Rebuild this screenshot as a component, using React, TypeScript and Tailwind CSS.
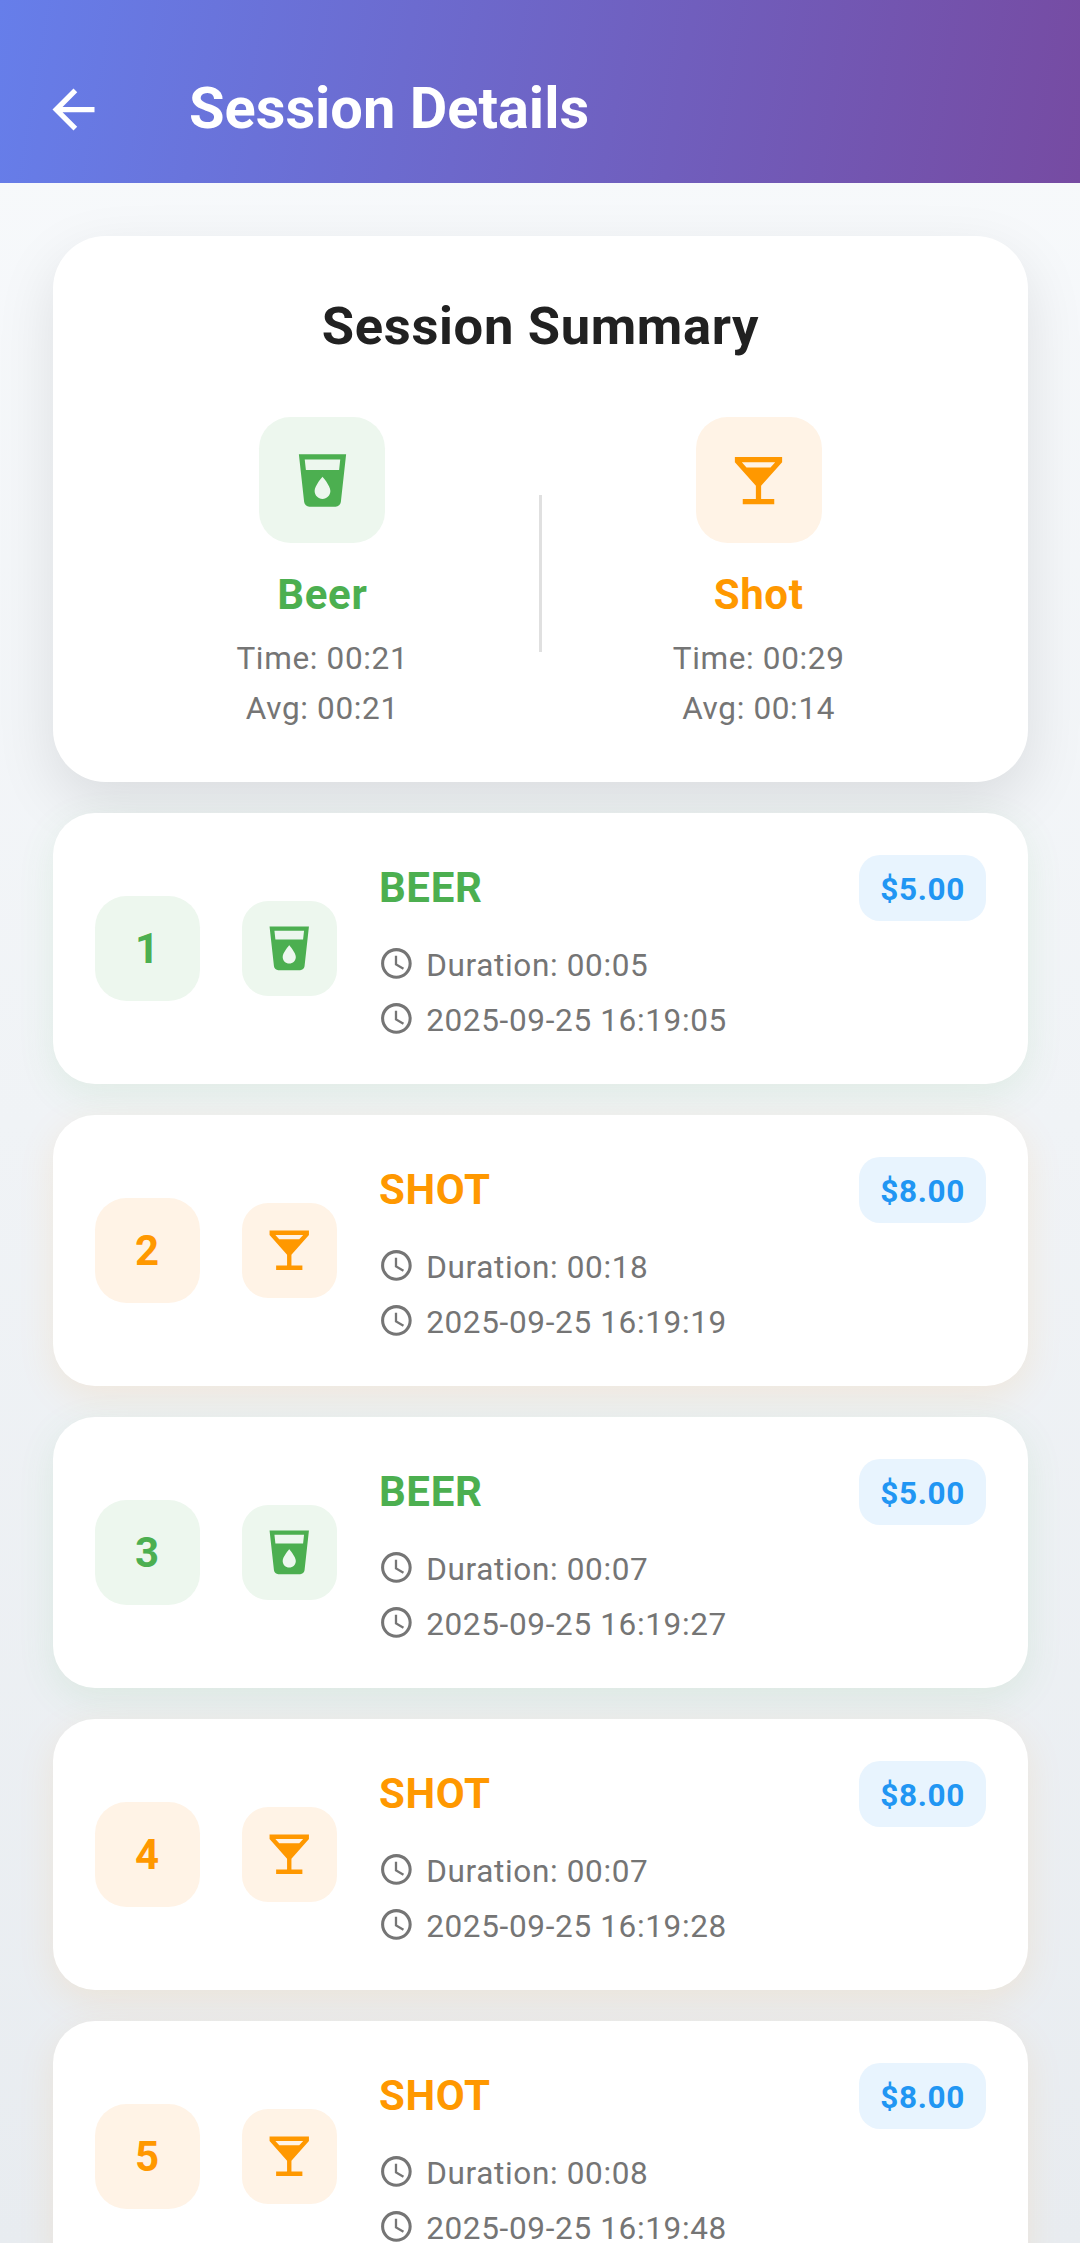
import { MdAccessTime, MdArrowBack, MdLocalBar, MdLocalDrink } from 'react-icons/md'

const drinks = {
  beer: {
    label: 'Beer',
    icon: MdLocalDrink,
    text: 'text-[#4caf50]',
    tint: 'bg-[#edf7ee]',
    shadow: 'shadow-[0_10.5px_37px_rgba(76,175,80,0.1)]',
  },
  shot: {
    label: 'Shot',
    icon: MdLocalBar,
    text: 'text-[#ff9800]',
    tint: 'bg-[#fff3e6]',
    shadow: 'shadow-[0_10.5px_37px_rgba(255,152,0,0.1)]',
  },
}

type Kind = keyof typeof drinks

const summary: { kind: Kind; time: string; avg: string }[] = [
  { kind: 'beer', time: '00:21', avg: '00:21' },
  { kind: 'shot', time: '00:29', avg: '00:14' },
]

const entries: { kind: Kind; duration: string; date: string; price: string }[] = [
  { kind: 'beer', duration: '00:05', date: '2025-09-25 16:19:05', price: '$5.00' },
  { kind: 'shot', duration: '00:18', date: '2025-09-25 16:19:19', price: '$8.00' },
  { kind: 'beer', duration: '00:07', date: '2025-09-25 16:19:27', price: '$5.00' },
  { kind: 'shot', duration: '00:07', date: '2025-09-25 16:19:28', price: '$8.00' },
  { kind: 'shot', duration: '00:08', date: '2025-09-25 16:19:48', price: '$8.00' },
]

function Header() {
  return (
    <header className="h-[183px] shrink-0 pt-9 pl-[42px] flex items-center bg-[linear-gradient(99.6deg,#667eea,#764ba2)] text-white">
      <MdArrowBack className="size-[63px]" />
      <h1 className="ml-[84px] pb-0.5 text-[57.75px] leading-none font-bold">Session Details</h1>
    </header>
  )
}

function SummaryItem({ kind, time, avg }: (typeof summary)[number]) {
  const drink = drinks[kind]
  const Icon = drink.icon
  return (
    <div className="flex-1 h-[313px] flex flex-col items-center">
      <div className={`size-[126px] shrink-0 rounded-[31.5px] flex items-center justify-center ${drink.tint} ${drink.text}`}>
        <Icon className="size-[63px]" />
      </div>
      <div className={`mt-[27px] text-[42px] leading-[50px] font-bold ${drink.text}`}>{drink.label}</div>
      <div className="mt-[13.5px] text-[31.5px] leading-[50px] text-[#757575] text-center">
        <div>Time: {time}</div>
        <div>Avg: {avg}</div>
      </div>
    </div>
  )
}

function Summary() {
  return (
    <section className="h-[546px] shrink-0 rounded-[52.5px] bg-white px-[52.5px] pt-[59px] shadow-[0_21px_60px_rgba(0,0,0,0.1)]">
      <h2 className="text-center text-[52.5px] leading-[62px] font-bold text-[#212121]">Session Summary</h2>
      <div className="mt-[60px] flex items-center">
        <SummaryItem {...summary[0]} />
        <div className="w-[2.6px] h-[157.5px] bg-[#e0e0e0]" />
        <SummaryItem {...summary[1]} />
      </div>
    </section>
  )
}

function Entry({ n, kind, duration, date, price }: (typeof entries)[number] & { n: number }) {
  const drink = drinks[kind]
  const Icon = drink.icon
  return (
    <li className={`h-[270.5px] shrink-0 rounded-[42px] bg-white p-[42px] flex items-center gap-[42px] ${drink.shadow}`}>
      <div className={`size-[105px] rounded-[31.5px] flex items-center justify-center text-[42px] font-bold ${drink.tint} ${drink.text}`}>
        {n}
      </div>
      <div className={`size-[94.5px] rounded-[26.25px] flex items-center justify-center ${drink.tint} ${drink.text}`}>
        <Icon className="size-[52.5px]" />
      </div>
      <div className="flex-1 self-start -ml-[0.6px]">
        <div className="flex items-center justify-between">
          <span className={`pl-px text-[42px] leading-none font-bold uppercase ${drink.text}`}>{drink.label}</span>
          <span className="h-[66px] rounded-[21px] px-[21px] pt-[3px] flex items-center bg-[#e8f4fe] text-[31.5px] font-bold text-[#2196f3]">
            {price}
          </span>
        </div>
        <div className="mt-[17px] text-[31.5px] leading-[55px] text-[#757575]">
          <div className="flex items-center gap-[11.5px]">
            <MdAccessTime className="size-[36.75px] mb-1" />
            Duration: {duration}
          </div>
          <div className="flex items-center gap-[11.5px]">
            <MdAccessTime className="size-[36.75px] mb-1" />
            {date}
          </div>
        </div>
      </div>
    </li>
  )
}

export default function App() {
  return (
    <div className="h-[2243px] overflow-hidden flex flex-col bg-[linear-gradient(180deg,#f8fafc,#e8ecf0)] font-[Roboto,sans-serif]">
      <Header />
      <main className="pl-[53px] pr-[52px] pt-[53px] tracking-[0.656px]">
        <Summary />
        <ul className="mt-[31px] flex flex-col gap-[31.5px]">
          {entries.map((e, i) => (
            <Entry key={i} n={i + 1} {...e} />
          ))}
        </ul>
      </main>
    </div>
  )
}
